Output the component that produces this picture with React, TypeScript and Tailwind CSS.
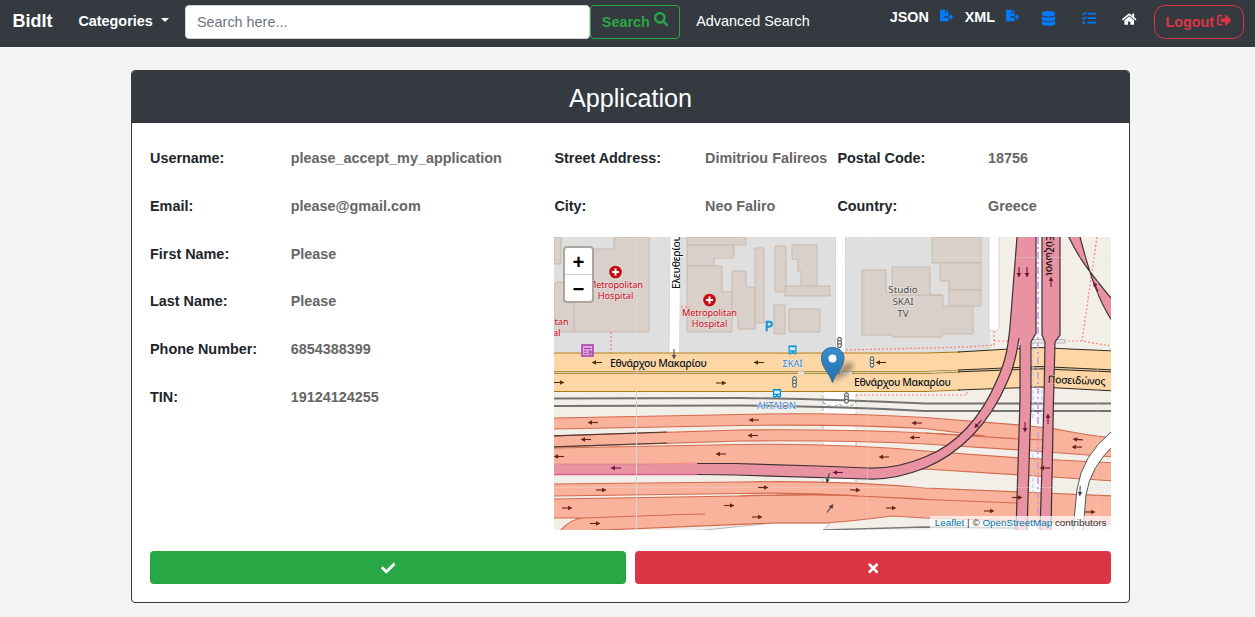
import React from "react";
import {
  FaCheck,
  FaDatabase,
  FaFileExport,
  FaHome,
  FaSearch,
  FaSignOutAlt,
  FaTasks,
  FaTimes,
} from "react-icons/fa";

function Navbar() {
  return (
    <nav className="flex h-[47px] items-start bg-[#343a40] pt-[5px] pl-[12.600px] pr-[11px] font-bold text-white">
      <span className="w-[65.800px] text-[18px] leading-[33px]">BidIt</span>
      <button className="flex w-[106.600px] items-center text-[14.4px] leading-[32px]">
        Categories
        <span className="-mt-[2px] ml-[8px] h-0 w-0 border-x-[4px] border-t-[4px] border-x-transparent border-t-white" />
      </button>
      <input
        className="h-[34px] w-[405px] rounded-[4px] border border-[#ced4da] bg-white px-[11px] text-[14.4px] font-normal placeholder:text-[#6c757d]"
        placeholder="Search here..."
      />
      <button className="flex h-[34px] w-[90px] items-center justify-center gap-[4px] rounded-[4px] border border-[#28a745] pt-[1px] text-[14.4px] text-[#28a745]">
        Search
        <FaSearch className="-mt-[6px] h-[14.4px] w-[14.4px]" />
      </button>
      <span className="ml-[16.200px] text-[14.4px] leading-[32px] font-normal">Advanced Search</span>
      <div className="ml-auto flex items-start text-[14.4px]">
        <span className="w-[50px] leading-[24px]">JSON</span>
        <FaFileExport className="mt-[4px] h-[13px] w-[13px] text-[#007bff]" />
        <span className="ml-[12px] w-[41px] leading-[24px]">XML</span>
        <FaFileExport className="mt-[4px] h-[13px] w-[13px] text-[#007bff]" />
        <FaDatabase className="mt-[6px] ml-[22px] h-[15px] w-[15px] text-[#007bff]" />
        <FaTasks className="mt-[6px] ml-[26px] h-[14.4px] w-[14.4px] text-[#007bff]" />
        <FaHome className="mt-[7px] ml-[26px] h-[14.4px] w-[14.4px]" />
        <button className="ml-[17.500px] flex h-[34px] w-[90px] items-center justify-center gap-[3px] rounded-[11px] border border-[#dc3545] pt-[1px] pr-[1px] text-[14.4px] text-[#dc3545]">
          Logout
          <FaSignOutAlt className="-mt-[5px] h-[14.4px] w-[14.4px]" />
        </button>
      </div>
    </nav>
  );
}

function Field({ label, value, wide }: { label: string; value: string; wide?: boolean }) {
  return (
    <div className="flex h-[47.8px] items-center whitespace-nowrap">
      <dt className={wide ? "w-[150.6px] shrink-0" : "w-[140.700px] shrink-0"}>{label}</dt>
      <dd className="text-[#666666]">{value}</dd>
    </div>
  );
}

const buildings = [
  "554,237 561,237 561,264 554,264",
  "614,237 649,237 649,332 554,332 554,285 557,282 574,282 574,249 614,249",
  "687,237 746,237 746,245 687,245",
  "687,245 734,245 734,258 714,258 714,266 687,266",
  "687,266 722,266 722,292 732,292 732,332 687,332",
  "732,271 746,271 746,287 755,287 755,329 738,329 738,316 732,316",
  "755,248 764,248 764,323 755,323",
  "775,246 786,246 786,292 775,292",
  "792,245 817,245 817,286 801,286 801,271 798,271 798,259 792,259",
  "785,286 830,286 830,296 785,296",
  "774,305 785,305 785,334 774,334",
  "789,309 820,309 820,332 789,332",
  "862,270 886,270 886,292 892,292 892,267 930,267 930,295 943,295 943,306 973,306 973,334 942,334 942,337 892,337 892,335 862,335",
  "932,237 981,237 981,263 932,263",
  "940,263 981,263 981,290 949,290 949,281 940,281",
  "949,290 981,290 981,306 949,306",
];

const salmonRoads = [
  "M550 418 L740 414.5 Q840 412 925 417.5 L1020 425 L1056 429 Q1090 436 1115 438 L1115 457 L1020 450 L925 444 Q840 440 740 441 L550 447 L550 436 L740 430 Q840 429 925 433 L985 436 L925 428.500 Q840 424 740 425.500 L550 429Z",
  "M550 448 L740 444.500 Q840 443 925 451 L1020 458 L1115 463 L1115 481 L1020 475 L925 469 L885 474 L735 470 L550 472Z",
  "M550 484 L740 482 Q840 480 925 488 L1020 492 L1115 496 L1115 524 L925 518 L892 516 Q855 521 825 523 L774 523 L580 531 L560 531 Q570 519 583 518 L550 518 L550 499 L740 496 Q820 494 858 496 Q800 492 740 493.500 L550 496Z",
];

const casings = [
  "M550 436 L667 432 M550 447 L667 443",
  "M583 518 L640 516 Q690 514 705 514 M740 496 Q820 493 858 496 L925 499.500 L1018 503 M925 499 L858 496",
  "M925 433 L1020 439 L1045 440",
];

const arrows: [number, number, number, string][] = [
  [597, 362.500, 180, "#503000"],
  [759, 362.500, 180, "#503000"],
  [881, 362.500, 180, "#503000"],
  [559, 382.500, 0, "#503000"],
  [721, 383, 0, "#503000"],
  [593, 422.500, 180, "#6b2018"],
  [586, 439.500, 180, "#6b2018"],
  [559, 456.500, 180, "#6b2018"],
  [721, 454, 180, "#6b2018"],
  [616, 468, 180, "#6f143c"],
  [601, 490, 0, "#6b2018"],
  [567, 508, 0, "#6b2018"],
  [729, 505.500, 0, "#6b2018"],
  [595, 523.500, 0, "#6b2018"],
  [754, 420, 180, "#6b2018"],
  [753, 435.500, 180, "#6b2018"],
  [917, 423, 180, "#6b2018"],
  [915, 437.500, 180, "#6b2018"],
  [884, 457, 180, "#6b2018"],
  [838, 472.500, 180, "#6f143c"],
  [763, 487.500, 0, "#6b2018"],
  [855, 490, 3, "#6b2018"],
  [757, 517, 0, "#6b2018"],
  [891, 508, 0, "#6b2018"],
  [828, 478, 107, "#444444"],
  [830, 508.500, -53, "#444444"],
  [978, 424, 132, "#6f143c"],
  [1025, 427, 90, "#6f143c"],
  [1048, 419, -90, "#6f143c"],
  [1019, 272, 92, "#6f143c"],
  [1027, 272, 90, "#6f143c"],
  [1051, 282, -90, "#6f143c"],
  [1096, 287, -115, "#6f143c"],
  [1078, 439.500, 184, "#6b2018"],
  [1077, 447, 181, "#6b2018"],
  [1045, 468, 181, "#6b2018"],
  [1017, 497.500, 0, "#6b2018"],
  [989, 511, 0, "#6b2018"],
  [1090, 512, 0, "#6b2018"],
  [1080, 491, 92, "#444444"],
  [674, 354, 90, "#555555"],
];

function TrafficLight({ x, y }: { x: number; y: number }) {
  return (
    <g transform={`translate(${x} ${y})`} fill="#eeeeee" stroke="#555555" strokeWidth="1">
      <rect x="-1.500" y="-5" width="3" height="10" rx="1" />
      <circle cy="-3.200" r="1.900" />
      <circle r="1.900" />
      <circle cy="3.200" r="1.900" />
    </g>
  );
}

function BusStop({ x, y }: { x: number; y: number }) {
  return (
    <g transform={`translate(${x} ${y})`}>
      <path d="M-4 -4.500H4V3.500H3V4.500H1.500V3.500H-1.500V4.500H-3V3.500H-4Z" fill="#0092da" />
      <path d="M-2.800 -2.800H2.800V0.300H-2.800Z" fill="#d8edf5" />
      <path d="M-2.800 2H-1.200M1.200 2H2.800" stroke="#ffffff" />
    </g>
  );
}

function Hospital({ x, y }: { x: number; y: number }) {
  return (
    <g>
      <circle cx={x} cy={y} r="6.300" fill="#c40b16" />
      <path d={`M${x - 3.500} ${y}H${x + 3.500}M${x} ${y - 3.500}V${y + 3.500}`} stroke="#ffffff" strokeWidth="2" />
      <g fill="#c40b20" stroke="#ecdcda" strokeWidth="1.200" paintOrder="stroke" textAnchor="middle" fontSize="9.200">
        <text x={x} y={y + 16} textLength="55">Metropolitan</text>
        <text x={x} y={y + 26.500}>Hospital</text>
      </g>
    </g>
  );
}

const roadNames = [
  { text: "Εθνάρχου Μακαρίου", transform: "translate(610 366.5)", length: 97, halo: "#fcdfb8" },
  { text: "Εθνάρχου Μακαρίου", transform: "translate(854 386)", length: 97, halo: "#fcdfb8" },
  { text: "Ποσειδώνος", transform: "translate(1047.5 383) rotate(2)", length: 58, halo: "#fcdfb8" },
  { text: "Ελευθερίου", transform: "translate(680 289) rotate(-90)", length: 54, halo: "#ffffff" },
  { text: "Εύζωνοι", transform: "translate(1046 235) rotate(90)", length: 41, halo: "#e892a2" },
];

function StreetMap() {
  return (
    <svg
      viewBox="554 237 557 293"
      className="block h-full w-full font-['Noto_Sans',sans-serif] font-normal"
      role="img"
    >
      <defs>
        <linearGradient id="pin" x1="0" y1="0" x2="0" y2="1">
          <stop offset="0" stopColor="#3b8fcb" />
          <stop offset="1" stopColor="#2270ae" />
        </linearGradient>
        <filter id="shade" x="-50%" y="-50%" width="200%" height="200%">
          <feGaussianBlur stdDeviation="2.500" />
        </filter>
        <clipPath id="view">
          <rect x="554" y="237" width="557" height="293" />
        </clipPath>
      </defs>
      <g clipPath="url(#view)">
        <rect x="554" y="237" width="557" height="293" fill="#f2efe9" />
        <path d="M554 237H990V352H554Z" fill="#dfdfdf" />
        <g fill="#d9d0c9" stroke="#c6b8a9" strokeWidth="0.900">
          {buildings.map((points) => (
            <polygon key={points} points={points} />
          ))}
          <path d="M574 282V332M892 295H943" fill="none" />
        </g>
        <g fill="#ffffff" stroke="#cfcfcf" strokeWidth="0.800">
          <path d="M670 235H681L679.500 355H669Z" />
          <path d="M835.500 235H845.500V355H835.500Z" />
          <path d="M989 235V326Q989 331 994 331T999 326V235Z" />
          <path d="M823 391H856V485H823Z" strokeDasharray="4 2" stroke="#aaaaaa" />
          <path d="M705 530L774 523H830L823 531H680Z" stroke="#aaaaaa" />
        </g>
        <path d="M1031 237H1042V530H1031Z" fill="#f8f5fa" />
        <g fill="none" stroke="#fa8072" strokeWidth="1.200" strokeDasharray="2 2">
          <path d="M611 332V353M681 307H690M846 350L966 347L994 345V331M994 341H1015M1060 341H1082L1111 346M1097 237L1082 341M856 395H967V391" />
        </g>

        <path
          d="M550 353H925L960 352L1010 349Q1040 346 1070 349L1115 351V391L1040 387L960 390L925 391H550Z"
          fill="#fcd6a4"
        />
        <g fill="none" stroke="#a97918" strokeWidth="1.100">
          <path d="M550 353H925L960 352M550 391.500H925L960 390" />
          <path d="M550 371.500H925L960 370.300M550 373.500H925L960 372" />
        </g>
        <path d="M550 372.500H925L1040 367.500L1115 371" fill="none" stroke="#d9ccb4" strokeWidth="1.300" />
        <path
          d="M958 352L1010 349Q1040 346 1070 349L1115 351M958 390L1040 387L1115 391M958 370L1040 366.500L1115 370M958 371.800L1040 368.800L1115 372"
          fill="none"
          stroke="#33291a"
        />
        <path d="M840 373H852M798 373H804" stroke="#e7e7e7" strokeWidth="3" />

        <g fill="none" stroke="#727272" strokeWidth="1.900">
          <path d="M550 398.500L740 398Q830 399 925 403.500H1115" />
          <path d="M550 406L740 405.500Q830 406 925 411H1115" />
        </g>
        <path d="M823 402Q832 410 839 404Q847 411 856 402" fill="none" stroke="#888888" strokeDasharray="4 2" />

        <g fill="#f9b29c" stroke="#d46a4d" strokeWidth="1.100">
          {salmonRoads.map((d) => (
            <path key={d} d={d} />
          ))}
        </g>
        <g fill="none" strokeWidth="1.200">
          <path d={casings[0]} stroke="#4c3a36" />
          <path d={casings[1]} stroke="#d46a4d" />
          <path d={casings[2]} stroke="#d46a4d" />
        </g>
        <path d="M823 530L925 527L1018 528" fill="none" stroke="#777777" strokeWidth="1.300" />

        <path d="M1111 432Q1082 456 1077 489L1073 531H1083L1086 495Q1090 467 1115 444Z" fill="#ffffff" stroke="#555555" />

        <path d="M1038 237V530" stroke="#c8a0d6" strokeWidth="1.700" strokeDasharray="7 3 2 3" fill="none" />
        <path d="M1033 342V420M1033 448V493M1042 390V420" stroke="#a9d3df" strokeDasharray="4 2" fill="none" />
        <path d="M1012 339.500H1065V343H1012Z" fill="#e5e5e5" stroke="#aaaaaa" strokeWidth="0.800" />

        <g fill="#e892a2">
          <path d="M1017 235H1036V333L1031 342V400L1027 531H1016L1020 400V345L1019 338C1017 352 1014 367 1008 380C990 424 959 454 925 468Q895 480 868 479L735 475L550 474V464H697L735 463.500L818 466L868 468Q897 469 925 457C956 445 981 418 997 380C1007 358 1008 345 1010 327Z" />
          <path d="M1042 235H1060V335L1055 342L1053.500 400L1051 531H1040L1044 400L1045 342L1042 335Z" />
          <path d="M1067 233C1080 262 1094 277 1115 303V325C1099 303 1090 276 1079 233Z" />
        </g>
        <g fill="none" stroke="#403036" strokeWidth="1.200">
          <path d="M1017 237L1010 327C1008 345 1007 358 997 380C981 418 956 445 925 457Q897 469 868 468L818 466L735 463.500H697" />
          <path d="M697 474.500L735 475L868 479Q895 480 925 468C959 454 990 424 1008 380C1014 367 1017 352 1019 338" />
          <path d="M1036 237V333L1031 342V400L1027 531M1020 345V400L1016 531" />
          <path d="M1042 237V335L1045 342L1044 400L1040 531M1060 237V335L1055 342L1053.500 400L1051 531" />
          <path d="M1067 233C1080 262 1094 277 1115 303M1079 233C1090 276 1099 303 1115 325" />
        </g>
        <path d="M550 474.500H697" stroke="#dc5b87" strokeWidth="1.300" />
        <path d="M550 464H650L697 463" stroke="#ea8282" strokeWidth="0.800" fill="none" />

        <g stroke="#e4e4e4" strokeOpacity="0.350" strokeWidth="0.900">
          <path d="M636.500 237V530M867.500 237V530M1097.500 237V530M554 257.500H1111M554 487.500H1111" />
        </g>
        <path d="M636.500 391V530" stroke="#d8d8d8" />

        {arrows.map(([x, y, angle, color]) => (
          <g key={`${x}-${y}`} transform={`translate(${x} ${y}) rotate(${angle})`}>
            <path d="M-5 0H2" stroke={color} strokeWidth="1.100" />
            <path d="M1 -2.300L5.500 0L1 2.300Z" fill={color} />
          </g>
        ))}

        <TrafficLight x={839.5} y={342.5} />
        <TrafficLight x={872} y={362} />
        <TrafficLight x={794.5} y={382} />
        <TrafficLight x={846.5} y={398} />
        <BusStop x={792.5} y={350} />
        <BusStop x={777} y={393.5} />

        <g stroke="#a63bab" fill="none">
          <path d="M582 345H593V356H582Z" fill="#dda9df" strokeWidth="1.500" />
          <path d="M584 348.500H591M584 351H587M584 353.500H587M589 351H591V354H589Z" />
        </g>

        <Hospital x={615.5} y={272} />
        <Hospital x={709.5} y={300} />
        <g fill="#c40b20" stroke="#ecdcda" strokeWidth="1.200" paintOrder="stroke" fontSize="9.200">
          <text x="554.500" y="325">tan</text>
          <text x="553" y="335.500">al</text>
        </g>

        <text x="764.500" y="330.500" fill="#0092da" fontSize="14" stroke="#0092da" strokeWidth="0.600">P</text>
        <g fill="#4a4a4a" stroke="#e8e3df" strokeWidth="1.500" paintOrder="stroke" fontSize="9.800" textAnchor="middle">
          <text x="903" y="293">Studio</text>
          <text x="903" y="305">SKAI</text>
          <text x="903" y="316.500">TV</text>
        </g>
        <g fill="#2c86f2" stroke="#f6ead9" strokeWidth="1.200" paintOrder="stroke" fontSize="9.200" textAnchor="middle">
          <text x="792.500" y="366.500">ΣΚΑΪ</text>
          <text x="776.500" y="408.500" textLength="39">ΑΚΤΑΙΟΝ</text>
        </g>
        {roadNames.map(({ text, transform, length, halo }) => (
          <g key={transform} fontSize="10.500">
            <text
              transform={transform}
              textLength={length}
              fill="#111111"
              stroke={halo}
              strokeWidth="0.800"
              paintOrder="stroke"
              className="font-medium"
            >
              {text}
            </text>
          </g>
        ))}

        <path d="M832 382Q839 365 849 362Q858 365 848 373Z" fill="#000000" opacity="0.350" filter="url(#shade)" />
        <path
          d="M832.500 382.500C830 374 821.500 367 821.500 358.500C821.500 351.500 826 347.500 832.500 347.500S844 351.500 844 358.500C844 367 835 374 832.500 382.500Z"
          fill="url(#pin)"
          stroke="#2e6c97"
        />
        <circle cx="832.500" cy="358.500" r="4" fill="#ffffff" />
      </g>
    </svg>
  );
}

function MapPanel() {
  return (
    <div className="relative mt-[6px] -ml-[0.400px] h-[293px] w-[557px] overflow-hidden">
      <StreetMap />
      <div className="absolute top-[9px] left-[9px] w-[31px] overflow-hidden rounded-[4px] border-2 border-[#aaa7a3] bg-white text-center font-['Liberation_Mono',monospace] text-[20px] font-bold text-black">
        <button className="block h-[27px] w-full border-b border-[#cccccc] leading-[31px]">+</button>
        <button className="block h-[26px] w-full leading-[31px]">−</button>
      </div>
      <div className="absolute right-0 bottom-0 h-[14px] bg-white/70 px-[4.500px] text-[9.900px] leading-[14px] font-normal whitespace-nowrap text-[#333333]">
        <span className="text-[#0078a8]">Leaflet</span> | © <span className="text-[#0078a8]">OpenStreetMap</span> contributors
      </div>
    </div>
  );
}

export default function App() {
  return (
    <div className="h-[617px] overflow-hidden bg-[#f4f4f4] font-['Liberation_Sans',Arial,sans-serif] text-[14.4px] text-[#212529]">
      <Navbar />
      <main className="mt-[23px] ml-[131px] h-[533px] w-[999px] overflow-hidden rounded-[4px] border border-[#343a40] bg-white">
        <h1 className="h-[52px] border-b border-[#2d3035] bg-[#343a40] text-center text-[25.2px] leading-[54px] text-white">
          Application
        </h1>
        <div className="flex px-[18px] pt-[12px] font-bold">
          <dl className="w-[404.400px]">
            <Field label="Username:" value="please_accept_my_application" />
            <Field label="Email:" value="please@gmail.com" />
            <Field label="First Name:" value="Please" />
            <Field label="Last Name:" value="Please" />
            <Field label="Phone Number:" value="6854388399" />
            <Field label="TIN:" value="19124124255" />
          </dl>
          <div>
            <dl className="grid grid-cols-[283px_273px]">
              <Field wide label="Street Address:" value="Dimitriou Falireos" />
              <Field wide label="Postal Code:" value="18756" />
              <Field wide label="City:" value="Neo Faliro" />
              <Field wide label="Country:" value="Greece" />
            </dl>
            <MapPanel />
          </div>
        </div>
        <div className="mt-[21px] flex gap-[9px] px-[18px] text-white">
          <button className="flex h-[33px] w-[476px] items-center justify-center rounded-[4px] bg-[#28a745] pt-[2px]">
            <FaCheck className="h-[14.4px] w-[14.4px]" />
          </button>
          <button className="flex h-[33px] w-[476px] items-center justify-center rounded-[4px] bg-[#dc3545] pt-[2px]">
            <FaTimes className="h-[14.4px] w-[14.4px]" />
          </button>
        </div>
      </main>
    </div>
  );
}
